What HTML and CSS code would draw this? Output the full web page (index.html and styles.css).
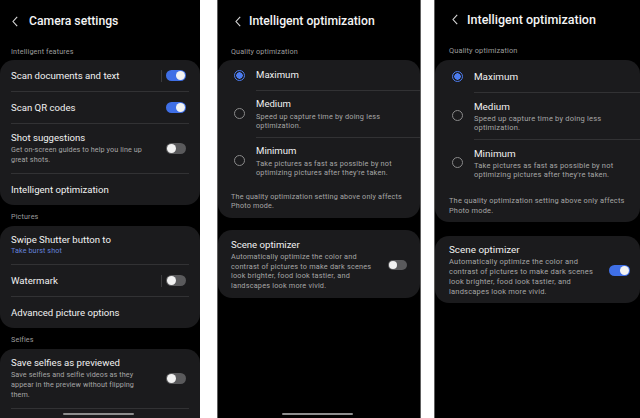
FILE: index.html
```html
<!DOCTYPE html>
<html lang="en">
<head>
    <meta charset="UTF-8">
    <meta name="viewport" content="width=device-width, initial-scale=1.0">
    <title>Camera settings</title>
    <link rel="stylesheet" href="styles.css">
</head>
<body>
    <div class="screens">
        <!-- screen 1: camera settings list -->
        <section class="phone phone-main">
            <header class="top">
                <svg class="back" width="6" height="11" viewBox="0 0 6 11"><path d="M5.2 0.8 L1 5.5 L5.2 10.2"/></svg>
                <h1>Camera settings</h1>
            </header>

            <p class="group-label">Intelligent features</p>
            <div class="card">
                <div class="row">
                    <div class="row-text"><span class="row-title">Scan documents and text</span></div>
                    <span class="split"></span>
                    <span class="switch on"></span>
                </div>
                <div class="row">
                    <div class="row-text"><span class="row-title">Scan QR codes</span></div>
                    <span class="switch on"></span>
                </div>
                <div class="row row-tall">
                    <div class="row-text">
                        <span class="row-title">Shot suggestions</span>
                        <span class="row-sub">Get on-screen guides to help you line up great shots.</span>
                    </div>
                    <span class="switch"></span>
                </div>
                <div class="row">
                    <div class="row-text"><span class="row-title">Intelligent optimization</span></div>
                </div>
            </div>

            <p class="group-label">Pictures</p>
            <div class="card">
                <div class="row row-tall">
                    <div class="row-text">
                        <span class="row-title">Swipe Shutter button to</span>
                        <span class="row-link">Take burst shot</span>
                    </div>
                </div>
                <div class="row">
                    <div class="row-text"><span class="row-title">Watermark</span></div>
                    <span class="split"></span>
                    <span class="switch"></span>
                </div>
                <div class="row">
                    <div class="row-text"><span class="row-title">Advanced picture options</span></div>
                </div>
            </div>

            <p class="group-label">Selfies</p>
            <div class="card">
                <div class="row row-tall">
                    <div class="row-text">
                        <span class="row-title">Save selfies as previewed</span>
                        <span class="row-sub">Save selfies and selfie videos as they appear in the preview without flipping them.</span>
                    </div>
                    <span class="switch"></span>
                </div>
                <div class="row row-more"></div>
            </div>

            <div class="home-bar"></div>
        </section>

        <!-- screen 2: intelligent optimization, scene optimizer off -->
        <section class="phone phone-opt">
            <header class="top">
                <svg class="back" width="6" height="11" viewBox="0 0 6 11"><path d="M5.2 0.8 L1 5.5 L5.2 10.2"/></svg>
                <h1>Intelligent optimization</h1>
            </header>

            <p class="group-label">Quality optimization</p>
            <div class="card opt-card">
                <div class="opt-row">
                    <span class="radio checked"></span>
                    <div class="opt-body"><span class="opt-title">Maximum</span></div>
                </div>
                <div class="opt-row">
                    <span class="radio"></span>
                    <div class="opt-body">
                        <span class="opt-title">Medium</span>
                        <span class="opt-sub">Speed up capture time by doing less optimization.</span>
                    </div>
                </div>
                <div class="opt-row">
                    <span class="radio"></span>
                    <div class="opt-body">
                        <span class="opt-title">Minimum</span>
                        <span class="opt-sub">Take pictures as fast as possible by not optimizing pictures after they're taken.</span>
                    </div>
                </div>
                <p class="opt-note">The quality optimization setting above only affects Photo mode.</p>
            </div>

            <div class="card scene-card">
                <div class="scene-text">
                    <span class="opt-title">Scene optimizer</span>
                    <span class="scene-sub">Automatically optimize the color and contrast of pictures to make dark scenes look brighter, food look tastier, and landscapes look more vivid.</span>
                </div>
                <span class="switch"></span>
            </div>

            <div class="home-bar"></div>
        </section>

        <!-- screen 3: same page, scene optimizer on -->
        <section class="phone phone-opt phone-opt-b">
            <header class="top">
                <svg class="back" width="6" height="11" viewBox="0 0 6 11"><path d="M5.2 0.8 L1 5.5 L5.2 10.2"/></svg>
                <h1>Intelligent optimization</h1>
            </header>

            <p class="group-label">Quality optimization</p>
            <div class="card opt-card">
                <div class="opt-row">
                    <span class="radio checked"></span>
                    <div class="opt-body"><span class="opt-title">Maximum</span></div>
                </div>
                <div class="opt-row">
                    <span class="radio"></span>
                    <div class="opt-body">
                        <span class="opt-title">Medium</span>
                        <span class="opt-sub">Speed up capture time by doing less optimization.</span>
                    </div>
                </div>
                <div class="opt-row">
                    <span class="radio"></span>
                    <div class="opt-body">
                        <span class="opt-title">Minimum</span>
                        <span class="opt-sub">Take pictures as fast as possible by not optimizing pictures after they're taken.</span>
                    </div>
                </div>
                <p class="opt-note">The quality optimization setting above only affects Photo mode.</p>
            </div>

            <div class="card scene-card">
                <div class="scene-text">
                    <span class="opt-title">Scene optimizer</span>
                    <span class="scene-sub">Automatically optimize the color and contrast of pictures to make dark scenes look brighter, food look tastier, and landscapes look more vivid.</span>
                </div>
                <span class="switch on"></span>
            </div>
        </section>
    </div>
</body>
</html>
```

FILE: styles.css
```css
body {
    margin: 0;
    padding: 0;
    background: #fff;
    font-family: Roboto, "Noto Sans", sans-serif;
}

.screens {
    display: flex;
    align-items: flex-start;
}

.phone {
    position: relative;
    height: 418px;
    box-sizing: border-box;
    background: #000;
    color: #f1f1f1;
    overflow: hidden;
}

.phone-main {
    width: 200px;
}

.phone-opt {
    width: 204px;
    margin-left: 17px;
    border-left: 1px solid #5e5e5e;
    border-right: 1px solid #5e5e5e;
}

.phone-opt-b {
    width: 206px;
    margin-left: 13px;
    border-right: none;
}

/* header */
.top {
    display: flex;
    align-items: center;
    height: 42px;
    padding-left: 12px;
    gap: 11px;
}

.top h1 {
    margin: 0;
    font-size: 12.2px;
    font-weight: 500;
    color: #f4f4f4;
}

.back path {
    fill: none;
    stroke: #d8d8d8;
    stroke-width: 1.1;
}

.phone-opt .top {
    padding-left: 17px;
    gap: 8px;
}

.phone-opt-b .top {
    height: 38px;
    gap: 9px;
}

.phone-opt-b .top h1 {
    font-size: 12.5px;
}

.group-label {
    margin: 0;
    padding: 7px 11px 4px;
    font-size: 7.2px;
    letter-spacing: 0.15px;
    line-height: 10px;
    color: #9d9d9d;
}

.phone-main .group-label:first-of-type {
    padding: 5px 11px 3px;
}

.phone-opt .group-label {
    padding: 5px 13px 3px;
}

.phone-opt-b .group-label {
    padding: 8px 14px 4px;
    font-size: 7.4px;
}

/* cards */
.card {
    background: #1b1b1d;
    border-radius: 14px;
}

.phone-main .card {
    padding: 0 11px;
}

.row {
    display: flex;
    align-items: center;
    padding: 9px 0;
}

.row + .row {
    border-top: 1px solid #323234;
}

.row-tall {
    padding: 7px 0 8px;
}

.row-more {
    height: 13px;
}

.row-text {
    flex: 1;
    display: flex;
    flex-direction: column;
}

.row-title {
    font-size: 9.6px;
    line-height: 13px;
    color: #f1f1f1;
}

.row-sub {
    width: 140px;
    margin-top: 1px;
    font-size: 7.2px;
    letter-spacing: 0.1px;
    line-height: 10px;
    color: #a6a6a6;
}

.row-link {
    font-size: 7.2px;
    letter-spacing: 0.1px;
    line-height: 10px;
    color: #6583dc;
}

.split {
    width: 1px;
    height: 12px;
    margin-right: 4px;
    background: #3a3a3c;
}

/* toggle */
.switch {
    position: relative;
    flex: none;
    width: 20px;
    height: 11px;
    margin-right: 3px;
    border-radius: 6px;
    background: #5a5a5c;
}

.switch::after {
    content: "";
    position: absolute;
    top: 1px;
    left: 1px;
    width: 9px;
    height: 9px;
    border-radius: 50%;
    background: #f2f2f2;
}

.switch.on {
    background: #3f6fe6;
}

.switch.on::after {
    left: 10px;
}

/* quality options */
.opt-row {
    display: flex;
    align-items: center;
    padding-left: 16px;
}

.radio {
    flex: none;
    box-sizing: border-box;
    width: 11px;
    height: 11px;
    margin-right: 11px;
    border: 1px solid #8a8a8a;
    border-radius: 50%;
}

.radio.checked {
    border: 1.5px solid #4c7cf0;
    background: radial-gradient(circle, #4c7cf0 0 3px, transparent 3.4px);
}

.opt-body {
    flex: 1;
    display: flex;
    flex-direction: column;
    padding: 9px 9px 9px 0;
}

.opt-row + .opt-row .opt-body {
    border-top: 1px solid #323234;
    padding: 7px 9px 7px 0;
}

.opt-title {
    font-size: 9.6px;
    line-height: 12px;
    color: #f1f1f1;
}

.opt-sub {
    margin-top: 2px;
    font-size: 7.3px;
    letter-spacing: 0.2px;
    line-height: 9px;
    color: #a6a6a6;
}

.opt-note {
    margin: 0;
    padding: 8px 10px 8px 13px;
    font-size: 7.2px;
    letter-spacing: 0.2px;
    line-height: 9px;
    color: #a6a6a6;
}

.scene-card {
    display: flex;
    align-items: center;
    margin-top: 12px;
    padding: 9px 13px 7px;
}

.scene-text {
    flex: 1;
    display: flex;
    flex-direction: column;
}

.scene-sub {
    width: 142px;
    margin-top: 1px;
    font-size: 7.3px;
    letter-spacing: 0.2px;
    line-height: 9.7px;
    color: #a6a6a6;
}

.scene-card .switch {
    width: 19px;
    height: 10px;
    margin-right: 0;
}

.scene-card .switch::after {
    width: 8px;
    height: 8px;
}

/* screen 3 is captured a little larger */
.phone-opt-b .opt-row {
    padding-left: 17px;
}

.phone-opt-b .opt-body {
    padding: 9.5px 8px 9.5px 0;
}

.phone-opt-b .opt-row + .opt-row .opt-body {
    padding: 7px 8px 6px 0;
}

.phone-opt-b .opt-title {
    font-size: 9.9px;
    line-height: 13px;
}

.phone-opt-b .opt-sub {
    margin-top: 1px;
    font-size: 7.5px;
    line-height: 9.4px;
}

.phone-opt-b .opt-note {
    padding: 10px 8px 6px 14px;
    font-size: 7.4px;
    line-height: 10px;
}

.phone-opt-b .scene-card {
    margin-top: 14px;
    padding: 7px 10px 6px 14px;
}

.phone-opt-b .scene-sub {
    width: 148px;
    font-size: 7.5px;
    line-height: 10.2px;
}

.phone-opt-b .scene-card .switch {
    width: 21px;
    height: 11px;
}

.phone-opt-b .scene-card .switch::after {
    width: 9px;
    height: 9px;
    left: 11px;
}

.home-bar {
    position: absolute;
    bottom: 3px;
    left: 50%;
    width: 71px;
    height: 2.5px;
    margin-left: -37px;
    border-radius: 2px;
    background: #8e8e8e;
}
```
